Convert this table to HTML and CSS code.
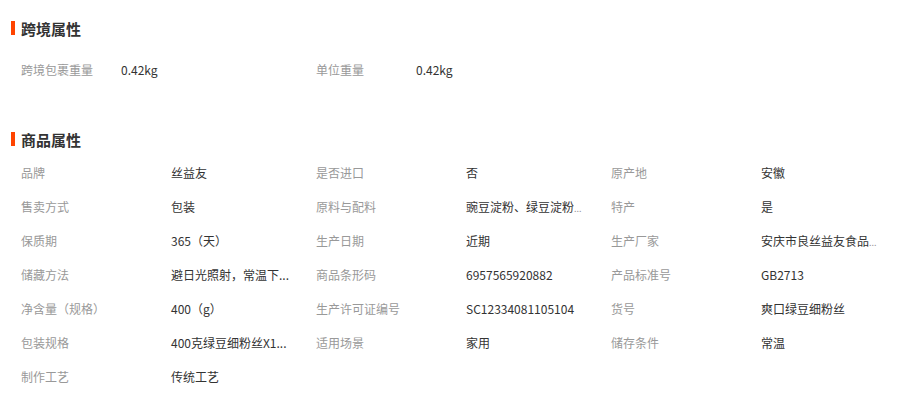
FILE: index.html
```html
<!DOCTYPE html>
<html lang="zh-CN">
<head>
<meta charset="utf-8">
<title>属性</title>
<link rel="stylesheet" href="styles.css">
</head>
<body>
<div class="page">
  <section class="section section-cross">
    <h2 class="title"><span class="bar"></span>跨境属性</h2>
    <div class="grid grid-cross">
      <div class="label">跨境包裹重量</div><div class="value">0.42kg</div>
      <div class="label">单位重量</div><div class="value">0.42kg</div>
    </div>
  </section>
  <section class="section section-goods">
    <h2 class="title"><span class="bar"></span>商品属性</h2>
    <div class="grid grid-goods">
      <div class="label">品牌</div><div class="value">丝益友</div>
      <div class="label">是否进口</div><div class="value">否</div>
      <div class="label">原产地</div><div class="value">安徽</div>

      <div class="label">售卖方式</div><div class="value">包装</div>
      <div class="label">原料与配料</div><div class="value">豌豆淀粉、绿豆淀粉<span class="dots">...</span></div>
      <div class="label">特产</div><div class="value">是</div>

      <div class="label">保质期</div><div class="value">365（天）</div>
      <div class="label">生产日期</div><div class="value">近期</div>
      <div class="label">生产厂家</div><div class="value">安庆市良丝益友食品<span class="dots">...</span></div>

      <div class="label">储藏方法</div><div class="value">避日光照射，常温下...</div>
      <div class="label">商品条形码</div><div class="value">6957565920882</div>
      <div class="label">产品标准号</div><div class="value">GB2713</div>

      <div class="label">净含量（规格）</div><div class="value">400（g）</div>
      <div class="label">生产许可证编号</div><div class="value">SC12334081105104</div>
      <div class="label">货号</div><div class="value">爽口绿豆细粉丝</div>

      <div class="label">包装规格</div><div class="value">400克绿豆细粉丝X1...</div>
      <div class="label">适用场景</div><div class="value">家用</div>
      <div class="label">储存条件</div><div class="value">常温</div>

      <div class="label">制作工艺</div><div class="value">传统工艺</div>
    </div>
  </section>
</div>
</body>
</html>
```

FILE: styles.css
```css
* { box-sizing: border-box; }
html, body { margin: 0; padding: 0; background: #fff; }
body {
  font-family: "Noto Sans CJK SC", "Liberation Sans", sans-serif;
  font-size: 12px;
  color: #333;
}
.page { padding-top: 18px; }
.title {
  display: flex;
  align-items: center;
  margin: 0;
  padding-left: 11px;
  height: 20px;
  font-size: 15px;
  font-weight: bold;
  color: #333;
}
.bar {
  width: 4px;
  height: 14px;
  background: #ff4400;
  margin-right: 6px;
}
.grid {
  display: grid;
  padding-left: 21px;
  grid-auto-rows: 34px;
  line-height: 34px;
}
.grid-cross {
  grid-template-columns: 100px 195px 100px 195px;
  padding-top: 15px;
}
.section-goods { margin-top: 42px; }
.grid-goods {
  grid-template-columns: 150px 145px 150px 145px 150px 145px;
  padding-top: 7px;
}
.label { color: #999; white-space: nowrap; }
.value {
  color: #333;
  white-space: nowrap;
}
.dots { font-size: 9px; line-height: 0; color: #999; }
```
